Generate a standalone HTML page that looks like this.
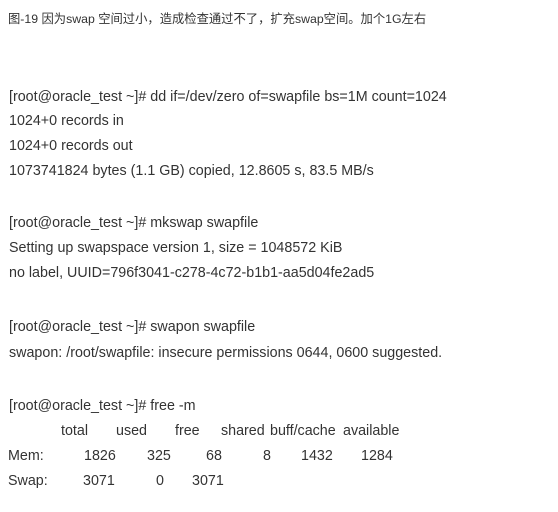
<!DOCTYPE html>
<html><head><meta charset="utf-8"><style>
body{margin:0;width:558px;height:512px;background:#fff;position:relative;overflow:hidden;font-family:"Liberation Sans",Arial,sans-serif;color:#333;}
.t{position:absolute;left:8px;top:9px;font-size:12.3px;font-family:"Liberation Sans","Noto Sans CJK SC",sans-serif;white-space:nowrap}
.l{position:absolute;left:9px;font-size:14.3px;white-space:nowrap;line-height:16px}
.c{position:absolute;font-size:14.3px;white-space:nowrap;line-height:16px}
</style></head><body>
<div class="t">图-19 因为swap 空间过小，造成检查通过不了，扩充swap空间。加个1G左右</div>
<div class="l" style="top:89px">[root@oracle_test ~]# dd if=/dev/zero of=swapfile bs=1M count=1024</div>
<div class="l" style="top:113px">1024+0 records in</div>
<div class="l" style="top:138px">1024+0 records out</div>
<div class="l" style="top:163px">1073741824 bytes (1.1 GB) copied, 12.8605 s, 83.5 MB/s</div>
<div class="l" style="top:215px">[root@oracle_test ~]# mkswap swapfile</div>
<div class="l" style="top:240px">Setting up swapspace version 1, size = 1048572 KiB</div>
<div class="l" style="top:265px">no label, UUID=796f3041-c278-4c72-b1b1-aa5d04fe2ad5</div>
<div class="l" style="top:319px">[root@oracle_test ~]# swapon swapfile</div>
<div class="l" style="top:345px">swapon: /root/swapfile: insecure permissions 0644, 0600 suggested.</div>
<div class="l" style="top:398px">[root@oracle_test ~]# free -m</div>
<div class="c" style="top:423px;left:61px">total</div>
<div class="c" style="top:423px;left:116px">used</div>
<div class="c" style="top:423px;left:175px">free</div>
<div class="c" style="top:423px;left:221px">shared</div>
<div class="c" style="top:423px;left:270px">buff/cache</div>
<div class="c" style="top:423px;left:343px">available</div>
<div class="c" style="top:448px;left:8px">Mem:</div>
<div class="c" style="top:448px;left:84px">1826</div>
<div class="c" style="top:448px;left:147px">325</div>
<div class="c" style="top:448px;left:206px">68</div>
<div class="c" style="top:448px;left:263px">8</div>
<div class="c" style="top:448px;left:301px">1432</div>
<div class="c" style="top:448px;left:361px">1284</div>
<div class="c" style="top:473px;left:8px">Swap:</div>
<div class="c" style="top:473px;left:83px">3071</div>
<div class="c" style="top:473px;left:156px">0</div>
<div class="c" style="top:473px;left:192px">3071</div>
</body></html>
